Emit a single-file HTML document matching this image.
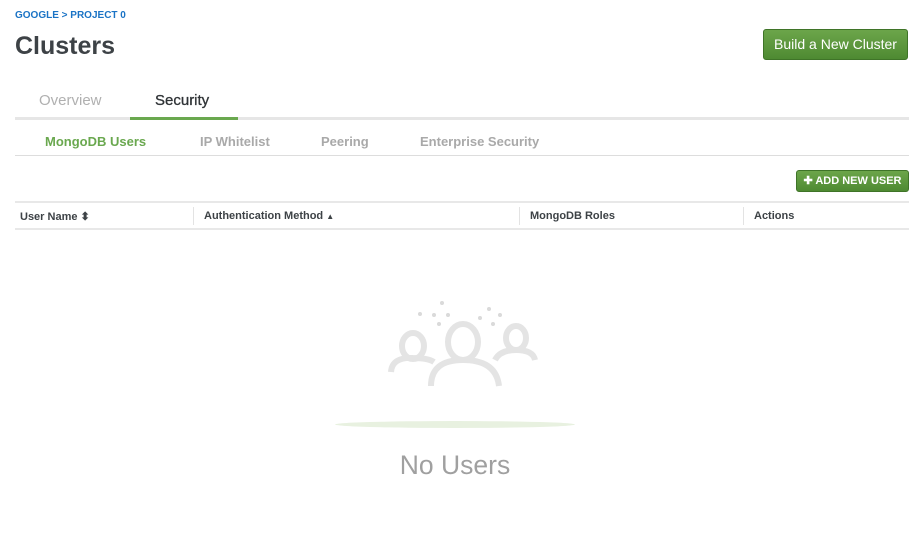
<!DOCTYPE html>
<html><head><style>
body{margin:0;width:913px;height:542px;background:#fff;font-family:"Liberation Sans",sans-serif;position:relative;overflow:hidden}
.a{position:absolute;white-space:nowrap}
</style></head><body>
<div class="a" style="left:15px;top:10px;font-size:10px;font-weight:bold;color:#1a73c5">GOOGLE &gt; PROJECT 0</div>
<div class="a" style="left:15px;top:32px;font-size:25px;font-weight:bold;color:#3d4246">Clusters</div>
<div class="a" style="left:763px;top:29px;width:145px;height:31px;box-sizing:border-box;background:linear-gradient(#6ca54a,#4e8a32);border:1px solid #3f7428;border-radius:3px;color:#fff;font-size:14px;text-align:center;line-height:29px">Build a New Cluster</div>
<div class="a" style="left:39px;top:92px;font-size:15px;color:#b0b0b0">Overview</div>
<div class="a" style="left:155px;top:92px;font-size:15px;color:#2f3336;-webkit-text-stroke:0.3px #2f3336">Security</div>
<div class="a" style="left:15px;top:117px;width:894px;height:3px;background:#e6e6e6"></div>
<div class="a" style="left:130px;top:117px;width:108px;height:3px;background:#6aa84f"></div>
<div class="a" style="left:45px;top:134px;font-size:13px;font-weight:bold;color:#6aa84f">MongoDB Users</div>
<div class="a" style="left:200px;top:134px;font-size:13px;font-weight:bold;color:#a9a9a9">IP Whitelist</div>
<div class="a" style="left:321px;top:134px;font-size:13px;font-weight:bold;color:#a9a9a9">Peering</div>
<div class="a" style="left:420px;top:134px;font-size:13px;font-weight:bold;color:#a9a9a9">Enterprise Security</div>
<div class="a" style="left:15px;top:155px;width:894px;height:1px;background:#ddd"></div>
<div class="a" style="left:796px;top:170px;width:113px;height:22px;box-sizing:border-box;background:linear-gradient(#6ca54a,#4e8a32);border:1px solid #3f7428;border-radius:3px;color:#fff;font-size:11px;font-weight:bold;text-align:center;line-height:20px">✚ ADD NEW USER</div>
<div class="a" style="left:15px;top:201px;width:894px;height:2px;background:#e8e8e8"></div>
<div class="a" style="left:15px;top:228px;width:894px;height:2px;background:#e8e8e8"></div>
<div class="a" style="left:193px;top:207px;width:1px;height:18px;background:#e3e3e3"></div>
<div class="a" style="left:519px;top:207px;width:1px;height:18px;background:#e3e3e3"></div>
<div class="a" style="left:743px;top:207px;width:1px;height:18px;background:#e3e3e3"></div>
<div class="a" style="left:20px;top:210px;font-size:11px;font-weight:bold;color:#3d4246">User Name ⬍</div>
<div class="a" style="left:204px;top:210px;font-size:11px;font-weight:bold;color:#3d4246">Authentication Method <span style="font-size:8px">▲</span></div>
<div class="a" style="left:530px;top:210px;font-size:11px;font-weight:bold;color:#3d4246">MongoDB Roles</div>
<div class="a" style="left:754px;top:210px;font-size:11px;font-weight:bold;color:#3d4246">Actions</div>
<svg class="a" style="left:370px;top:290px" width="180" height="110" viewBox="0 0 180 110">
<g fill="none" stroke="#e4e4e4" stroke-width="6" stroke-linecap="butt">
<ellipse cx="43" cy="56" rx="11" ry="13"/>
<path d="M21 82 Q22 67 43 68 Q58 68 64 72"/>
<ellipse cx="93" cy="52" rx="15" ry="18"/>
<path d="M61 96 Q61 70 93 70 Q126 70 129 96"/>
<ellipse cx="146" cy="48" rx="10" ry="12"/>
<path d="M125 70 Q130 60 146 60 Q163 60 165 70"/>
</g>
<g fill="#dadada">
<circle cx="72" cy="13" r="2"/><circle cx="50" cy="24" r="2"/><circle cx="64" cy="25" r="2"/><circle cx="78" cy="25" r="2"/><circle cx="69" cy="34" r="2"/>
<circle cx="119" cy="19" r="2"/><circle cx="110" cy="28" r="2"/><circle cx="130" cy="25" r="2"/><circle cx="123" cy="34" r="2"/>
</g>
</svg>
<div class="a" style="left:335px;top:421px;width:240px;height:7px;border-radius:50%;background:#e8f1e0"></div>
<div class="a" style="left:0;width:910px;top:450px;text-align:center;font-size:26.5px;color:#a0a0a0">No Users</div>
</body></html>
